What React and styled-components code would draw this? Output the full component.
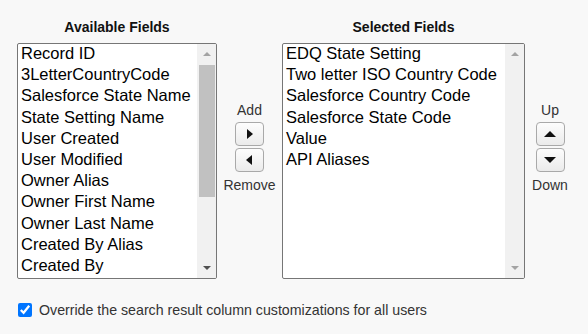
import styled, { createGlobalStyle } from "styled-components";

const GlobalStyle = createGlobalStyle`
  body {
    margin: 0;
    background: #f8f8f8;
    font-family: "Liberation Sans", Arial, sans-serif;
    color: #222;
  }
`;

const available = [
  "Record ID",
  "3LetterCountryCode",
  "Salesforce State Name",
  "State Setting Name",
  "User Created",
  "User Modified",
  "Owner Alias",
  "Owner First Name",
  "Owner Last Name",
  "Created By Alias",
  "Created By",
];

const selected = [
  "EDQ State Setting",
  "Two letter ISO Country Code",
  "Salesforce Country Code",
  "Salesforce State Code",
  "Value",
  "API Aliases",
];

const Page = styled.div`
  padding: 19px 0 0 17px;
  display: flex;
  flex-direction: column;
`;

const Columns = styled.div`
  display: flex;
  align-items: flex-start;
`;

const FieldColumn = styled.div`
  width: ${(p) => p.$width}px;
  display: flex;
  flex-direction: column;
`;

const Heading = styled.div`
  font-size: 14px;
  font-weight: bold;
  line-height: 16px;
  text-align: center;
  color: #111;
  margin-bottom: 8px;
`;

const ListBox = styled.div`
  height: 236px;
  box-sizing: border-box;
  border: 1px solid #767676;
  border-radius: 2px;
  background: #fff;
  display: flex;
  overflow: hidden;
`;

const Options = styled.div`
  flex: 1;
  padding-left: 3px;
  margin-top: -1px;
  overflow: hidden;
`;

const Option = styled.div`
  font-size: 16.5px;
  line-height: 21.2px;
  white-space: nowrap;
  color: #000;
`;

const Scrollbar = styled.div`
  width: 19px;
  background: #f1f1f1;
  display: flex;
  flex-direction: column;
`;

const ScrollArrow = styled.div`
  height: 20px;
  display: flex;
  align-items: center;
  justify-content: center;

  &::after {
    content: "";
    border-left: 4px solid transparent;
    border-right: 4px solid transparent;
    ${(p) =>
      p.$down
        ? `border-top: 4px solid ${p.$active ? "#505050" : "#a3a3a3"};`
        : `border-bottom: 4px solid ${p.$active ? "#505050" : "#a3a3a3"};`}
  }
`;

const Track = styled.div`
  flex: 1;
  padding: 1px 1px 0 2px;
`;

const Thumb = styled.div`
  height: 132px;
  background: #c1c1c1;
`;

const MoveColumn = styled.div`
  width: ${(p) => p.$width}px;
  padding-top: 83px;
  display: flex;
  flex-direction: column;
  align-items: center;
`;

const MoveLabel = styled.div`
  font-size: 14px;
  line-height: 16px;
  color: #333;
  margin: ${(p) => (p.$bottom ? "3px 0 0" : "0 0 4px")};
`;

const ArrowButton = styled.button`
  width: 29px;
  height: 24px;
  padding: 0;
  margin-bottom: 2px;
  border: 1px solid #a9a9a9;
  border-radius: 4px;
  background: linear-gradient(#fdfdfd, #ebebeb);
  display: flex;
  align-items: center;
  justify-content: center;

  &::after {
    content: "";
    ${(p) => {
      const c = "#111";
      if (p.$dir === "right")
        return `border-top: 5px solid transparent; border-bottom: 5px solid transparent; border-left: 6px solid ${c}; margin-left: 1px;`;
      if (p.$dir === "left")
        return `border-top: 5px solid transparent; border-bottom: 5px solid transparent; border-right: 6px solid ${c}; margin-right: 1px;`;
      if (p.$dir === "up")
        return `border-left: 6px solid transparent; border-right: 6px solid transparent; border-bottom: 6px solid ${c};`;
      return `border-left: 6px solid transparent; border-right: 6px solid transparent; border-top: 6px solid ${c};`;
    }}
  }
`;

const CheckRow = styled.label`
  display: flex;
  align-items: center;
  margin-top: 23px;
  font-size: 14.2px;
  color: #333;
`;

const Check = styled.input`
  width: 14px;
  height: 14px;
  margin: 0 7px 0 1px;
  accent-color: #0075ff;
`;

function FieldList({ items, scrollable }) {
  return (
    <ListBox>
      <Options>
        {items.map((item) => (
          <Option key={item}>{item}</Option>
        ))}
      </Options>
      <Scrollbar>
        <ScrollArrow />
        <Track>{scrollable && <Thumb />}</Track>
        <ScrollArrow $down $active={scrollable} />
      </Scrollbar>
    </ListBox>
  );
}

export default function App() {
  return (
    <>
      <GlobalStyle />
      <Page>
        <Columns>
          <FieldColumn $width={200}>
            <Heading>Available Fields</Heading>
            <FieldList items={available} scrollable />
          </FieldColumn>
          <MoveColumn $width={65}>
            <MoveLabel>Add</MoveLabel>
            <ArrowButton $dir="right" />
            <ArrowButton $dir="left" />
            <MoveLabel $bottom>Remove</MoveLabel>
          </MoveColumn>
          <FieldColumn $width={243}>
            <Heading>Selected Fields</Heading>
            <FieldList items={selected} />
          </FieldColumn>
          <MoveColumn $width={50}>
            <MoveLabel>Up</MoveLabel>
            <ArrowButton $dir="up" />
            <ArrowButton $dir="down" />
            <MoveLabel $bottom>Down</MoveLabel>
          </MoveColumn>
        </Columns>
        <CheckRow>
          <Check type="checkbox" defaultChecked />
          Override the search result column customizations for all users
        </CheckRow>
      </Page>
    </>
  );
}
